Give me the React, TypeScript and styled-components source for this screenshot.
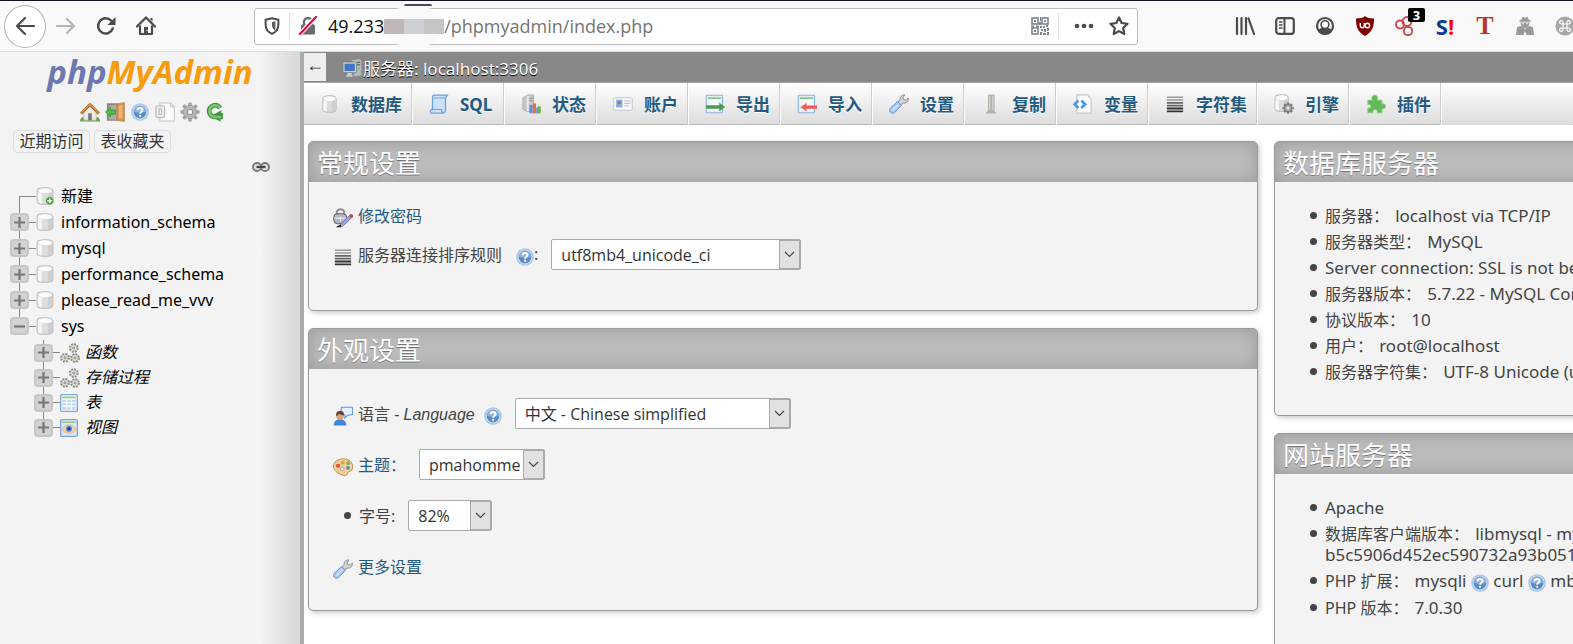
import React from 'react';
import styled, { createGlobalStyle } from 'styled-components';

const latin = '"Noto Sans", "Noto Sans CJK SC", sans-serif';
const controlFont = '"Open Sans", "Noto Sans CJK SC", sans-serif';

const GlobalStyle = createGlobalStyle`
  * { box-sizing: border-box; }
  html, body { margin: 0; height: 100%; overflow: hidden; background: #fff; }
  #root { height: 100%; }
  body { font: 16px/21px ${latin}; color: #444; }
  button, input, select { font: inherit; color: inherit; margin: 0; }
  a { color: #235a81; text-decoration: none; }
  svg { display: block; flex: none; }
`;

/* ---------- icons ---------- */

type IconProps = { size?: number };

const Svg = ({ size = 20, box = 16, children }: IconProps & { box?: number; children: React.ReactNode }) => (
  <svg width={size} height={size} viewBox={`0 0 ${box} ${box}`} aria-hidden="true">{children}</svg>
);

const BackIcon = () => (
  <Svg box={20}><path d="M19 10H2M10 2L2 10l8 8" fill="none" stroke="#4a4a4f" strokeWidth="2.2" strokeLinecap="round" strokeLinejoin="round" /></Svg>
);
const ForwardIcon = () => (
  <Svg box={20}><path d="M1 10h17M11 3l7 7-7 7" fill="none" stroke="#b5b5b7" strokeWidth="2.2" strokeLinecap="round" strokeLinejoin="round" /></Svg>
);
const ReloadIcon = () => (
  <Svg box={20}>
    <path d="M16.8 12.5A7.6 7.6 0 1 1 15.3 4.8" fill="none" stroke="#4a4a4f" strokeWidth="2.4" strokeLinecap="round" />
    <path d="M19.5 1v8h-8z" fill="#4a4a4f" />
  </Svg>
);
const HomeIcon = () => (
  <Svg box={20}>
    <path d="M1 10.5L10 1.5l9 9" fill="none" stroke="#4a4a4f" strokeWidth="2.3" strokeLinecap="round" strokeLinejoin="round" />
    <path d="M4 9.5V18h12V9.5" fill="none" stroke="#4a4a4f" strokeWidth="2.2" strokeLinejoin="round" />
    <path d="M8 11h4v7H8z" fill="#4a4a4f" />
    <path d="M14.5 2h2v3.5l-2-2z" fill="#4a4a4f" />
    <circle cx="11" cy="14.5" r=".7" fill="#fff" />
  </Svg>
);
const ShieldIcon = () => (
  <Svg size={18} box={18}>
    <path d="M9 1.2l6.4 1.6v5c0 4.300-2.300 7.200-6.400 9-4.100-1.800-6.400-4.700-6.400-9v-5z" fill="none" stroke="#4a4a4f" strokeWidth="2" strokeLinejoin="round" />
    <path d="M9 4.300v9.400c-2.300-1.300-3.400-3.200-3.400-5.900V5.100z" fill="#4a4a4f" transform="translate(3.400 0)" opacity=".9" />
  </Svg>
);
const LockIcon = () => (
  <Svg box={20}>
    <path d="M6 9V6a4 4 0 0 1 8 0v3" fill="none" stroke="#6a6a6e" strokeWidth="2.400" />
    <rect x="3" y="8.500" width="14" height="10" rx="1.500" fill="#6a6a6e" />
    <path d="M2 18L18 1" stroke="#fff" strokeWidth="4.500" />
    <path d="M2 18L18 1" stroke="#e8103f" strokeWidth="2.300" strokeLinecap="round" />
  </Svg>
);
const QrIcon = () => (
  <Svg size={18} box={18}>
    <g fill="none" stroke="#7d828c" strokeWidth="1.600">
      <rect x="1" y="1" width="6" height="6" /><rect x="11" y="1" width="6" height="6" /><rect x="1" y="11" width="6" height="6" />
    </g>
    <g fill="#7d828c">
      <path d="M3 3h2v2H3zM13 3h2v2h-2zM3 13h2v2H3zM9 0h1v4H9zM8 5h2v3H8zM0 8.500h3V10H0zM5 8.500h3V10H5zM9 9h2v2H9zM12 9h2v2h-2zM15 8h2v2h-2zM10 12h2v2h-2zM13 12h2v3h-2zM16 11h2v3h-2zM9 15h2v3H9zM12 16h3v2h-3zM16 15h2v3h-2z" />
    </g>
  </Svg>
);
const DotsIcon = () => (
  <Svg box={20}><g fill="#4a4a4f"><circle cx="3" cy="10" r="2.300" /><circle cx="10" cy="10" r="2.300" /><circle cx="17" cy="10" r="2.300" /></g></Svg>
);
const StarIcon = () => (
  <Svg box={20}><path d="M10 1.500l2.600 5.500 6 .8-4.400 4.200 1.100 6L10 15.100 4.700 18l1.100-6L1.400 7.800l6-.8z" fill="none" stroke="#4a4a4f" strokeWidth="2.200" strokeLinejoin="round" /></Svg>
);
const LibraryIcon = () => (
  <Svg box={20}><path d="M2 2v16M6.500 2v16M11 2v16M13.500 2.500L19 18" stroke="#4a4a4f" strokeWidth="2.200" strokeLinecap="round" /></Svg>
);
const PanelIcon = () => (
  <Svg box={20}>
    <rect x="1.200" y="2.200" width="17.600" height="15.600" rx="2.500" fill="none" stroke="#4a4a4f" strokeWidth="2.200" />
    <path d="M9.500 2v16" stroke="#4a4a4f" strokeWidth="2" /><path d="M4 6h3.500M4 9h3.500M4 12h3.500" stroke="#4a4a4f" strokeWidth="1.300" />
  </Svg>
);
const AccountIcon = () => (
  <Svg box={20}>
    <circle cx="10" cy="10" r="8" fill="none" stroke="#4a4a4f" strokeWidth="2.200" />
    <path d="M3 13c1.500 0 3.500-.6 4.500-1.500h5c1 .9 3 1.500 4.500 1.500-1.200 3-4 5-7 5s-5.800-2-7-5z" fill="#4a4a4f" />
    <circle cx="10" cy="8.600" r="3.900" fill="#fff" stroke="#4a4a4f" strokeWidth="1.600" />
  </Svg>
);
const UblockIcon = () => (
  <Svg box={20}>
    <path d="M10 0c2 1.800 5 2.500 9 2.500 0 9-2 13.500-9 17.500C3 16 1 11.500 1 2.500 5 2.500 8 1.800 10 0z" fill="#800000" />
    <path d="M5.300 7v2.700a2 2 0 0 0 4 0V7" fill="none" stroke="#fff" strokeWidth="1.400" />
    <circle cx="12.400" cy="9.500" r="2.200" fill="none" stroke="#fff" strokeWidth="1.400" />
  </Svg>
);
const RingsIcon = () => (
  <Svg box={20}><g fill="none" stroke="#c9474c" strokeWidth="1.900"><circle cx="5" cy="8.500" r="4" /><circle cx="12" cy="5.500" r="4.500" /><circle cx="13" cy="15" r="4.200" /></g></Svg>
);
const SpyIcon = () => (
  <Svg box={20}>
    <g fill="#9a9a9a">
      <path d="M6.500 3.500L7.500.8l2.500 1 2.500-1 1 2.700 2 .8v1.500h-11V4.300z" /><path d="M5.500 6.500h9c0 3-2 5.500-4.500 5.500S5.500 9.500 5.500 6.500z" />
      <path d="M2 11l4-1 4 3 4-3 4 1 1 8H11.500L10 15l-1.500 4H1z" />
    </g>
    <circle cx="8" cy="7.800" r=".8" fill="#f9f9fa" /><circle cx="12" cy="7.800" r=".8" fill="#f9f9fa" />
  </Svg>
);
const CommandIcon = () => (
  <Svg box={20}>
    <circle cx="10" cy="10" r="9.500" fill="#a6a6a6" />
    <path d="M8 8h4v4H8zM8 8H6.300A1.700 1.700 0 1 1 8 6.300zM12 8V6.300A1.700 1.700 0 1 1 13.700 8zM12 12h1.700a1.700 1.700 0 1 1-1.700 1.700zM8 12v1.700A1.700 1.700 0 1 1 6.300 12z" fill="none" stroke="#fff" strokeWidth="1.200" />
  </Svg>
);

const HouseIcon = () => (
  <Svg>
    <path d="M0 14h16v1.600H0z" fill="#6fa257" /><circle cx="2" cy="13.500" r="1.400" fill="#5fa04e" /><circle cx="14" cy="13.500" r="1.400" fill="#5fa04e" />
    <path d="M3 8l5-5 5 5v6.500H3z" fill="#efe9de" stroke="#b8ad9b" strokeWidth=".5" />
    <path d="M6.500 9h3v5.600h-3z" fill="#777b80" />
    <path d="M.8 9.200L8 2l7.200 7.200" fill="none" stroke="#a8682f" strokeWidth="2.400" strokeLinejoin="round" />
    <path d="M1 8.600L8 1.700l7 6.900" fill="none" stroke="#d99a58" strokeWidth="1" />
  </Svg>
);
const ExitIcon = () => (
  <Svg>
    <path d="M1.500 1H10v14H1.500z" fill="#8b877f" /><path d="M3 2.500h7V14H3z" fill="#aeada8" />
    <path d="M9.500 1.500l6-1v15l-6-1z" fill="#d9914a" stroke="#b9783c" strokeWidth=".6" /><path d="M11 3l3-.6v11l-3-.5z" fill="#eab478" />
    <path d="M.4 8l4-4v2.400h4v3.400h-4V12z" fill="#54b848" stroke="#3f9438" strokeWidth=".7" />
  </Svg>
);
const HelpIcon = ({ size = 18 }: IconProps) => (
  <Svg size={size}>
    <circle cx="8" cy="8" r="7.800" fill="#a9c4e4" /><circle cx="8" cy="8" r="6.600" fill="#d0e0f3" /><circle cx="8" cy="8" r="5.700" fill="#5a8cc6" /><path d="M2.500 7.500a5.600 5.600 0 0 1 11 0C10 9 6 9 2.500 7.500z" fill="#8db2de" />
    <path d="M5.900 6.400c0-1.300.9-2 2.100-2s2.200.7 2.200 1.900c0 1.500-2.100 1.500-2.100 3.200" fill="none" stroke="#fff" strokeWidth="1.700" />
    <circle cx="8.100" cy="11.400" r="1" fill="#fff" />
  </Svg>
);
const DocsIcon = () => (
  <Svg>
    <path d="M4 .8h8.500l3 3v11.400H4z" fill="#fbfbfb" stroke="#c8c8c8" strokeWidth=".9" /><path d="M12.500.8v3h3" fill="none" stroke="#c8c8c8" strokeWidth=".9" />
    <rect x=".7" y="3" width="7" height="9.500" rx="1.500" fill="#ececec" stroke="#b8b8b8" strokeWidth=".9" /><rect x="3.300" y="5.600" width="1.800" height="4.200" fill="#fff" stroke="#b0b0b0" strokeWidth=".8" />
  </Svg>
);
const gearTeeth = [0, 45, 90, 135];
const GearIcon = () => (
  <Svg>
    {gearTeeth.map((a) => <rect key={a} x="6.600" y=".3" width="2.800" height="15.400" rx=".8" fill="#a3a3a3" transform={`rotate(${a} 8 8)`} />)}
    <circle cx="8" cy="8" r="5.400" fill="#b7b7b7" stroke="#969696" strokeWidth=".7" /><circle cx="8" cy="8" r="2.200" fill="#f3f3f3" stroke="#8f8f8f" strokeWidth=".9" />
  </Svg>
);
const RefreshIcon = () => (
  <Svg>
    <path d="M12 4.800A4.700 4.700 0 1 0 8 12h2.500" fill="none" stroke="#3f9442" strokeWidth="3.800" />
    <path d="M7 10l6-3.500v2.300h1.300v5H12.500v2L7 12.500z" fill="#3f9442" />
    <path d="M12 4.500A4.700 4.700 0 1 0 8 12h5" fill="none" stroke="#7cc76e" strokeWidth="2" />
  </Svg>
);
const ChainIcon = () => (
  <svg width="18" height="10" viewBox="0 0 18 10" aria-hidden="true">
    <rect x="1" y="1" width="8" height="8" rx="4" fill="#ddd" stroke="#777" strokeWidth="1.800" />
    <rect x="9" y="1" width="8" height="8" rx="4" fill="#ddd" stroke="#777" strokeWidth="1.800" />
    <path d="M4.500 5h9" stroke="#444" strokeWidth="2.200" />
  </svg>
);
const cylinder = (
  <>
    <path d="M1 3.200C1 1.700 3.500.6 8 .6s7 1.100 7 2.600v9.600c0 1.500-2.500 2.600-7 2.600s-7-1.100-7-2.600z" fill="#dedede" stroke="#b9b9b9" strokeWidth=".9" />
    <path d="M1.600 4.500v8.300c0 1 1.200 1.600 3.400 2V5.700C3 5.500 2.200 5 1.600 4.500z" fill="#f8f8f8" /><path d="M10.500 5.600v9.200c2.500-.3 4-.9 4-2V4.500c-.8.600-2.300 1-4 1.100z" fill="#cfcfcf" />
    <ellipse cx="8" cy="3.300" rx="6.200" ry="2.100" fill="#fcfcfc" />
  </>
);
const DbIcon = ({ size = 18 }: IconProps) => <Svg size={size}>{cylinder}</Svg>;
const DatabasesIcon = () => <Svg><g transform="translate(1.500 .8) scale(.76 .9)">{cylinder}</g></Svg>;
const DbAddIcon = () => (
  <Svg size={18}>
    {cylinder}
    <circle cx="12.200" cy="12.200" r="3.700" fill="#4f9a3a" stroke="#dff0d8" strokeWidth=".6" /><path d="M12.200 10.100v4.200M10.100 12.200h4.200" stroke="#fff" strokeWidth="1.300" />
  </Svg>
);
const RoutineIcon = () => (
  <Svg>
    {[[11, 4], [4, 11.800], [12, 12]].map(([x, y], i) => (
      <g key={i} transform={`translate(${x} ${y})`}>
        <circle r="3.200" fill="#f0efe9" stroke="#8a8a80" strokeWidth="1.400" strokeDasharray="1.600 .9" /><circle r="2.400" fill="#efeee8" stroke="#9a9a90" strokeWidth=".5" /><circle r=".9" fill="none" stroke="#777" strokeWidth=".7" />
      </g>
    ))}
  </Svg>
);
const TableIcon = () => (
  <Svg size={18}>
    <rect x=".6" y=".6" width="14.800" height="14.800" rx="1" fill="#fff" stroke="#7ba7dc" strokeWidth="1.200" /><path d="M2 2.200h12v1.600H2z" fill="#8fce7d" />
    <path d="M2 5h12v9H2z" fill="#bcd5f3" /><path d="M2 7.800h12M2 10.800h12M6 5v9M10 5v9" stroke="#fff" />
  </Svg>
);
const ViewIcon = () => (
  <Svg size={18}>
    <rect x=".6" y=".6" width="14.800" height="14.800" rx="1" fill="#dce9fa" stroke="#7ba7dc" strokeWidth="1.200" /><path d="M2 2.200h12v1.400H2z" fill="#8fce7d" />
    <path d="M2 9c2-5 10-5 12 0-2 5-10 5-12 0z" fill="#f2cdb2" stroke="#e2b08d" strokeWidth=".8" /><circle cx="8" cy="8.700" r="2.600" fill="#4a7fd0" /><circle cx="8" cy="8.700" r="1.200" fill="#17305f" />
  </Svg>
);
const ServerIcon = () => (
  <Svg>
    <path d="M8 1.500l6-.7 1.500 1V14l-6 .8z" fill="#b9bcc0" stroke="#8f9296" strokeWidth=".5" /><path d="M12 3h2.500v1H12zM12 5h2.500v1H12z" fill="#666" /><circle cx="13.500" cy="8.500" r=".9" fill="#4fd33e" />
    <rect x=".8" y="3.200" width="10.700" height="8.600" rx=".8" fill="#d6d9dd" stroke="#73777c" strokeWidth=".7" /><path d="M2 4.500h8.300v6H2z" fill="#3f76c5" />
    <path d="M4.500 12h3l1.300 3H3.200z" fill="#c8cbcf" />
  </Svg>
);
const ScrollIcon = () => (
  <Svg><path d="M4 .8h10.800L13.200 3v9.200c0 2-.7 3-2.200 3H1.500C.8 14.500.7 13 2.200 12.400h.6V3c0-1.200.4-2.200 1.200-2.200z" fill="#cde2fa" stroke="#6d9fdc" strokeWidth="1" /><path d="M2.200 12.400h8c-.2 1.500.2 2.500 1 2.800M4 3.200h9" fill="none" stroke="#6d9fdc" strokeWidth=".9" /></Svg>
);
const StatusIcon = () => (
  <Svg>
    <path d="M1.500 3l4-2.200H10V14H5l-3.500-1.800z" fill="#c9c9c9" stroke="#b0b0b0" strokeWidth=".8" /><path d="M5.500 1.500v12" stroke="#ececec" strokeWidth="1.400" /><path d="M6.500 3.500h3M6.500 5.500h3" stroke="#999" />
    <path d="M6.700 8.700h2.500v6.800H6.700z" fill="#5c8df0" /><path d="M9.400 7.500h2.700v8H9.400z" fill="#ef6a48" /><path d="M12.200 11h1.400v4.500h-1.400z" fill="#5c8df0" /><path d="M13.400 9.800h2.400v5.700h-2.400z" fill="#64b955" />
  </Svg>
);
const UsersIcon = () => (
  <Svg>
    <rect x=".6" y="3" width="14.800" height="10" rx=".8" fill="#f8f8f8" stroke="#c9c9c9" strokeWidth=".8" /><path d="M2.500 4.500h5v6.200h-5z" fill="#7fb0ee" /><circle cx="5" cy="7" r="1.400" fill="#b5713a" />
    <path d="M9 5.500h5M9 7.500h5M9 9.500h3.500" stroke="#b7c6da" />
  </Svg>
);
const sheet = (
  <>
    <rect x="1" y="1" width="13" height="14" rx=".6" fill="#e4eefa" stroke="#8fb2de" strokeWidth=".9" /><path d="M2.300 2.600h10.400v1.400H2.300z" fill="#8fc682" /><path d="M2.300 5.500h10.400M2.300 8h10.400M2.300 12.500h10.400M5.600 5v9M9.200 5v9" stroke="#fff" />
  </>
);
const ExportIcon = () => <Svg>{sheet}<path d="M1 9.200h10.500V7.200l4.300 3.200-4.300 3.200v-2H1z" fill="#4c9a4c" stroke="#5fa85a" strokeWidth=".5" /></Svg>;
const ImportIcon = () => <Svg>{sheet}<path d="M16 9.300H7.500V7.400L3 10.500l4.500 3.100v-1.900H16z" fill="#ef5b57" stroke="#f07b77" strokeWidth=".5" /></Svg>;
const WrenchIcon = () => (
  <Svg>
    <path d="M9 8.800L6.800 6.600l2-2.100C8.600 2.500 10 .6 12.800.7L11.200 2.700l.6 1.800 1.900.4 1.800-1.600c.3 2.600-1.700 4.300-3.900 4z" fill="#d4d4d4" stroke="#919191" strokeWidth=".8" />
    <path d="M6.800 6l3.200 3-5.600 6c-2 1.500-5.300-1-3.600-3.400z" fill="#a9c6f2" stroke="#6f95d2" strokeWidth=".8" /><path d="M7.500 8.500l-4.700 4.700" stroke="#dfeafa" />
  </Svg>
);
const ReplicationIcon = () => (
  <Svg><path d="M6 .8h2v12.500H6zM8.500.8h2v12.500h-2z" fill="#d2d2ce" stroke="#a0a09c" strokeWidth=".6" /><path d="M5 14h6M4 15h8" stroke="#b0b0ac" strokeWidth="1.200" /></Svg>
);
const VariablesIcon = () => (
  <Svg><path d="M3 .7h8.500L14.500 4v11.300H3z" fill="#fbfbfb" stroke="#c6c6c6" strokeWidth=".9" /><path d="M4.300 5.200L1.300 8.200l3 3M6.700 5.200l3 3-3 3" fill="none" stroke="#4d98ea" strokeWidth="2.200" /></Svg>
);
const CharsetIcon = ({ size = 20 }: IconProps) => (
  <Svg size={size}><path d="M1.500 2.500h13M1.500 4.700h13" stroke="#999" strokeWidth="1.200" /><path d="M1.500 7h13M1.500 9.300h13" stroke="#666" strokeWidth="1.400" /><path d="M1.500 11.600h13M1.500 13.900h13" stroke="#333" strokeWidth="1.500" /></Svg>
);
const EngineIcon = () => (
  <Svg>
    <g transform="scale(.76 .9)">{cylinder}</g>
    <g transform="translate(6.800 6.800) scale(.56)">
      {gearTeeth.map((a) => <rect key={a} x="6.200" y="0" width="3.600" height="16" fill="#7e7e7e" transform={`rotate(${a} 8 8)`} />)}
      <circle cx="8" cy="8" r="5.200" fill="#a9a9a9" stroke="#6f6f6f" /><circle cx="8" cy="8" r="2" fill="#eee" />
    </g>
  </Svg>
);
const PluginIcon = () => (
  <Svg><path d="M1.500 5h3.800C4 3 5.200 1 7 1s3 2 1.700 4h4v3.300c1.500-1 2.800 0 2.800 1.500s-1.300 2.500-2.800 1.500V15H9c.5-2-.5-2.600-1.700-2.600S5.200 13 5.500 15h-4v-3.800c1.800.6 2.500-.2 2.500-1.400S3.300 8 1.500 8.500z" fill="#63b957" stroke="#7cc873" strokeWidth=".7" /></Svg>
);
const PasswordIcon = () => (
  <Svg>
    <path d="M3 6V4a3 3 0 0 1 6 0v2" fill="none" stroke="#8c8f99" strokeWidth="1.700" /><rect x=".6" y="4.600" width="10.400" height="8" rx="3" fill="#b4b7c1" stroke="#5c5f6b" strokeWidth=".8" /><path d="M1.500 8h8.500M6 7v3.500" stroke="#f1f1f5" />
    <path d="M14 5.200l1.800 1.700-7.600 7.300-2.300.7.600-2.300z" fill="#9ea5e8" stroke="#565ba8" strokeWidth=".6" /><circle cx="14.700" cy="6.300" r="1.400" fill="#d9432c" /><path d="M2 15.400h4l2-1.300-1.700-1.200z" fill="#222" /><path d="M6.500 12.700l1.700 1.500-1.800.7z" fill="#e0b23c" />
  </Svg>
);
const LanguageIcon = () => (
  <Svg>
    <path d="M7.500 1h7c1 0 1.200.6 1.200 1.200V6c0 .8-.4 1.200-1.200 1.200H12L9.500 9.600V7.200C7.800 6.800 6.500 6 6.500 4.800V2.200C6.500 1.500 6.800 1 7.500 1z" fill="#e3effd" stroke="#5f95d9" strokeWidth=".9" />
    <path d="M.6 15.500c0-3 1.600-5 5-5s5 2 5 5z" fill="#4287e0" /><circle cx="5.600" cy="8" r="3" fill="#dba273" /><path d="M2.500 8c-.3-3 1.200-4 3.200-4s3.400 1 3 3.600C7 7.500 5.500 6.800 5 6c-.5 1-1.500 1.700-2.500 2z" fill="#6a4226" />
  </Svg>
);
const ThemeIcon = () => (
  <Svg>
    <path d="M8.500 1.500c4.300 0 7.200 2.400 7.200 6.500 0 2.500-1.400 3.200-2.600 3.500-1.400.4-1.300 1.200-1.700 2.200-.5 1.200-2 1.400-3.400.9C3.500 13 .4 10.800.4 7.400c0-3.700 4-5.900 8.100-5.900z" fill="#f1cf9e" stroke="#c38a4b" strokeWidth=".8" />
    <circle cx="4" cy="7" r="1.700" fill="#e5533c" /><circle cx="7.800" cy="4.500" r="1.500" fill="#e8a33a" /><circle cx="12.200" cy="5" r="1.600" fill="#77b84d" /><circle cx="12" cy="8.600" r="1.500" fill="#3e96b8" /><circle cx="7.500" cy="9.500" r="1.400" fill="#fff" stroke="#b97a45" strokeWidth=".6" />
  </Svg>
);

/* ---------- browser toolbar ---------- */

const Page = styled.div`
  display: flex;
  flex-direction: column;
  height: 100vh;
  overflow: hidden;
`;

const BrowserBar = styled.header`
  display: flex;
  align-items: center;
  flex: none;
  height: 52px;
  border-top: 1px solid #15122b;
  border-bottom: 1px solid #dcdcdc;
  background: #f9f9fa;
  padding-left: 4px;
`;

const PlainButton = styled.button`
  display: flex;
  align-items: center;
  justify-content: center;
  flex: none;
  width: 40px;
  height: 40px;
  padding: 0;
  border: 0;
  background: none;
`;

const RoundButton = styled(PlainButton)`
  width: 42px;
  height: 43px;
  border: 1px solid #b4b4b6;
  border-radius: 50%;
  background: #fff;
`;

const AddressBar = styled.div`
  display: flex;
  align-items: center;
  flex: 0 1 884px;
  min-width: 0;
  height: 37px;
  margin: 0 auto 0 88px;
  padding: 0 8px;
  border: 1px solid #bcbcbe;
  border-radius: 3px;
  background: #fff;
  color: #0c0c0d;
  font: 18px/24px ${controlFont};
`;

const Separator = styled.span<{ $wide?: boolean }>`
  width: 1px;
  height: 26px;
  margin: ${(p) => (p.$wide ? '0 15px 0 9px' : '0 8px')};
  background: #dcdcde;
`;

const Host = styled.label`
  margin-left: 10px;
`;

const Smudge = styled.span`
  position: relative;
  display: flex;
  align-items: center;
  flex: none;
  width: 60px;
  height: 43px;
  border-radius: 50%;
  background: #f9f9fa;
  &::before {
    content: '';
    position: absolute;
    top: -1px;
    left: 20px;
    width: 28px;
    height: 2px;
    border-radius: 14px 14px 0 0;
    background: #4a4763;
  }
`;

const Mosaic = styled.span<{ $tone: string }>`
  flex: 1;
  height: 15px;
  background: ${(p) => p.$tone};
`;

const UrlInput = styled.input`
  flex: 1;
  min-width: 0;
  padding: 0;
  border: 0;
  background: none;
  color: #737373;
  outline: 0;
`;

const AddressActions = styled.div`
  display: flex;
  align-items: center;
  gap: 15px;
`;

const Extensions = styled.nav`
  display: flex;
  flex: none;
  margin-right: -12px;
`;

const ExtensionWrap = styled.div`
  position: relative;
`;

const Badge = styled.span`
  position: absolute;
  top: 2px;
  right: 0;
  width: 17px;
  height: 14px;
  border-radius: 2px;
  background: #000;
  color: #fff;
  font: bold 13px/14px "Open Sans", sans-serif;
  text-align: center;
`;

const Letters = styled.b<{ $serif?: boolean }>`
  color: ${(p) => (p.$serif ? '#b23a2e' : '#0b3d91')};
  font: bold ${(p) => (p.$serif ? '26px' : '22px')} / 26px ${(p) => (p.$serif ? '"Liberation Serif", serif' : '"Open Sans", sans-serif')};
  i { color: #f00; font-style: normal; }
`;

/* ---------- navigation panel ---------- */

const Body = styled.div`
  display: flex;
  flex: 1;
  min-height: 0;
`;

const Sidebar = styled.aside`
  flex: 0 0 304px;
  border-right: 4px solid #aaa;
  background: linear-gradient(to right, #f3f3f3 260px, #d3d8da 300px);
  color: #000;
`;

const Logo = styled.a`
  display: block;
  height: 50px;
  color: #6c78af;
  font: italic bold 33px/40px "Open Sans", sans-serif;
  text-align: center;
  em { color: #f89c0e; }
`;

const NavIcons = styled.nav`
  display: flex;
  gap: 5px;
  padding-left: 80px;
  a { display: flex; width: 20px; height: 20px; align-items: center; justify-content: center; }
`;

const QuickButtons = styled.div`
  display: flex;
  gap: 4px;
  padding: 8px 0 0 13px;
`;

const QuickButton = styled.button`
  height: 23px;
  width: 77px;
  padding: 0;
  border: 1px solid #ddd;
  border-radius: 4px;
  background: none;
  color: #333;
  line-height: 21px;
  white-space: nowrap;
`;

const ChainButton = styled(PlainButton)`
  width: 18px;
  height: 10px;
  margin: 9px 30px 0 auto;
`;

const Tree = styled.ul`
  list-style: none;
  margin: 0;
  padding: 11px 0 0 10px;
`;

const Branch = styled.ul`
  list-style: none;
  margin: 0;
  padding: 1px 0 0 24px;
`;

const TreeRow = styled.div<{ $sub?: boolean }>`
  display: flex;
  align-items: center;
  height: ${(p) => (p.$sub ? 25 : 26)}px;
  font-style: ${(p) => (p.$sub ? 'italic' : 'normal')};
  a { color: #000; margin-left: ${(p) => (p.$sub ? 5 : 7)}px; }
`;

const NodeIcon = styled.span`
  display: flex;
  flex: none;
  width: 20px;
`;

const Rail = styled.span<{ $from?: string; $to?: string }>`
  align-self: stretch;
  display: flex;
  align-items: center;
  flex: none;
  width: 19px;
  background: linear-gradient(#888, #888) no-repeat 9px ${(p) => (p.$from ? '100%' : '0')} / 1px ${(p) => (p.$from || p.$to ? '50%' : '100%')};
`;

const Stem = styled.span<{ $long?: boolean }>`
  width: ${(p) => (p.$long ? 16 : 7)}px;
  height: 1px;
  margin-left: ${(p) => (p.$long ? -9 : 0)}px;
  background: #888;
`;

const Toggle = styled.button`
  display: flex;
  align-items: center;
  justify-content: center;
  width: 19px;
  height: 18px;
  padding: 0;
  border: 2px solid #c6c6c6;
  border-radius: 4px;
  background: #d2d2d2;
`;

const ToggleMark = ({ open }: { open?: boolean }) => (
  <svg width="11" height="11" viewBox="0 0 11 11" aria-hidden="true">
    <path d={open ? 'M0 5.500h11' : 'M0 5.500h11M5.500 0v11'} stroke="#777" strokeWidth="2.200" />
  </svg>
);

/* ---------- main area ---------- */

const Main = styled.main`
  flex: 1;
  min-width: 0;
  overflow: hidden;
`;

const ServerBar = styled.div`
  display: flex;
  align-items: center;
  height: 30px;
  background: #888;
  a { display: flex; align-items: center; gap: 1px; padding-top: 2px; color: #fff; font-size: 17px; text-shadow: 0 1px 0 #000; margin-left: 16px; }
`;

const Collapse = styled.button`
  width: 22px;
  height: 28px;
  padding: 0 0 4px;
  border: 0;
  background: #eee;
  color: #333;
  font: 18px/20px "Liberation Sans", sans-serif;
`;

const TabBar = styled.nav`
  display: flex;
  height: 43px;
  border-top: 1px solid #aaa;
  background: linear-gradient(#fff, #dcdcdc);
`;

const Tab = styled.a`
  display: flex;
  align-items: center;
  flex: none;
  gap: 11px;
  min-width: 92px;
  padding: 0 10px 0 16px;
  border-right: 1px solid #fff;
  box-shadow: inset -1px 0 #ccc, inset 0 -1px #bbb;
  font-size: 17px;
  font-weight: bold;
  text-shadow: 0 1px 0 #fff;
`;

const Panes = styled.div`
  display: grid;
  grid-template-columns: minmax(0, 1fr) 634px;
  align-items: start;
  gap: 16px;
  width: calc(100% + 335px);
  padding: 16px 0 0 4px;
`;

const Column = styled.div`
  display: flex;
  flex-direction: column;
  gap: 17px;
`;

const Panel = styled.section`
  border: 1px solid #999;
  border-radius: 5px;
  background: #f3f3f3;
  box-shadow: 2px 2px 5px #ccc;
  overflow: hidden;
`;

const PanelTitle = styled.h2`
  height: 40px;
  margin: 0;
  padding-left: 8px;
  background: #bbb;
  box-shadow: inset 0 0 16px #999;
  color: #fff;
  font-size: 26px;
  font-weight: normal;
  line-height: 43px;
  text-shadow: 0 1px 0 #777;
`;

const Settings = styled.div<{ $roomy?: boolean }>`
  display: grid;
  grid-auto-rows: ${(p) => (p.$roomy ? 51 : 39)}px;
  padding: ${(p) => (p.$roomy ? '19px 24px 18px' : '14px 24px 36px')};
`;

const Row = styled.div`
  display: flex;
  align-items: center;
  white-space: pre;
  a, label { display: flex; align-items: center; gap: 5px; }
  > a, > label { padding-top: 1px; }
  a > svg, label > svg { margin-top: 4px; }
  i { font-family: "Liberation Sans", sans-serif; }
`;

const HelpLink = styled.a<{ $gap: number }>`
  margin-left: ${(p) => p.$gap}px;
`;

const Bullet = styled.span`
  width: 7px;
  height: 7px;
  margin: 0 8px 0 11px;
  border-radius: 50%;
  background: #444;
`;

const SelectBox = styled.span<{ $width: number; $gap: number }>`
  position: relative;
  width: ${(p) => p.$width}px;
  height: 31px;
  margin-left: ${(p) => p.$gap}px;
  border: 1px solid #aaa;
  border-radius: 2px;
  background: #fff;
  color: #333;
`;

const NativeSelect = styled.select`
  appearance: none;
  width: 100%;
  height: 29px;
  padding: 2px 20px 0 9px;
  border: 0;
  background: none;
  font-family: ${controlFont};
`;

const SelectArrow = styled.span`
  position: absolute;
  inset: 0 0 0 auto;
  display: flex;
  align-items: center;
  justify-content: center;
  width: 21px;
  border: 1px solid #aaa;
  background: #e1e1e1;
  pointer-events: none;
`;

const InfoList = styled.ul`
  margin: 0;
  padding: 20px 24px 31px 50px;
  list-style: none;
`;

const InfoItem = styled.li`
  position: relative;
  padding: 3px 0 2px;
  font-size: 17px;
  white-space: pre-wrap;
  svg { display: inline-block; vertical-align: -5px; }
  &::before {
    content: '';
    position: absolute;
    left: -15px;
    top: 10px;
    width: 7px;
    height: 7px;
    border-radius: 50%;
    background: #444;
  }
`;

const InfoLabel = styled.span`
  margin-right: 2px;
  font-size: 16px;
  line-height: 16px;
`;

const Select = ({ id, width, gap, value }: { id: string; width: number; gap: number; value: string }) => (
  <SelectBox $width={width} $gap={gap}>
    <NativeSelect id={id} defaultValue={value}><option>{value}</option></NativeSelect>
    <SelectArrow>
      <svg width="11" height="7" viewBox="0 0 11 7" aria-hidden="true"><path d="M1 1l4.500 4.500L10 1" fill="none" stroke="#444" strokeWidth="1.100" /></svg>
    </SelectArrow>
  </SelectBox>
);

const tabs: [string, React.ReactNode][] = [
  ['数据库', <DatabasesIcon />], ['SQL', <ScrollIcon />], ['状态', <StatusIcon />], ['账户', <UsersIcon />],
  ['导出', <ExportIcon />], ['导入', <ImportIcon />], ['设置', <WrenchIcon />], ['复制', <ReplicationIcon />],
  ['变量', <VariablesIcon />], ['字符集', <CharsetIcon />], ['引擎', <EngineIcon />], ['插件', <PluginIcon />],
];

const databases = ['information_schema', 'mysql', 'performance_schema', 'please_read_me_vvv'];

const sysItems: [string, React.ReactNode][] = [
  ['函数', <RoutineIcon />], ['存储过程', <RoutineIcon />], ['表', <TableIcon />], ['视图', <ViewIcon />],
];

const serverInfo: [string, string][] = [
  ['服务器： ', 'localhost via TCP/IP'],
  ['服务器类型： ', 'MySQL'],
  ['', 'Server connection: SSL is not being used'],
  ['服务器版本： ', '5.7.22 - MySQL Community Server (GPL)'],
  ['协议版本： ', '10'],
  ['用户： ', 'root@localhost'],
  ['服务器字符集： ', 'UTF-8 Unicode (utf8)'],
];

export default function App() {
  return (
    <Page>
      <GlobalStyle />
      <BrowserBar>
        <RoundButton aria-label="Back"><BackIcon /></RoundButton>
        <PlainButton aria-label="Forward"><ForwardIcon /></PlainButton>
        <PlainButton aria-label="Reload"><ReloadIcon /></PlainButton>
        <PlainButton aria-label="Home"><HomeIcon /></PlainButton>
        <AddressBar>
          <ShieldIcon />
          <Separator />
          <LockIcon />
          <Host htmlFor="url">49.233</Host>
          <Smudge>
            <Mosaic $tone="#bdb7b5" /><Mosaic $tone="#cdd1d4" /><Mosaic $tone="#c5c5c6" />
          </Smudge>
          <UrlInput id="url" defaultValue="/phpmyadmin/index.php" />
          <QrIcon />
          <Separator $wide />
          <AddressActions>
            <DotsIcon />
            <StarIcon />
          </AddressActions>
        </AddressBar>
        <Extensions>
          <PlainButton aria-label="Library"><LibraryIcon /></PlainButton>
          <PlainButton aria-label="Sidebars"><PanelIcon /></PlainButton>
          <PlainButton aria-label="Account"><AccountIcon /></PlainButton>
          <PlainButton aria-label="Blocker"><UblockIcon /></PlainButton>
          <ExtensionWrap>
            <PlainButton aria-label="Proxy"><RingsIcon /></PlainButton>
            <Badge>3</Badge>
          </ExtensionWrap>
          <PlainButton><Letters>S<i>!</i></Letters></PlainButton>
          <PlainButton><Letters $serif>T</Letters></PlainButton>
          <PlainButton aria-label="Agent"><SpyIcon /></PlainButton>
          <PlainButton aria-label="Gestures"><CommandIcon /></PlainButton>
        </Extensions>
      </BrowserBar>
      <Body>
        <Sidebar>
          <Logo href="#">php<em>MyAdmin</em></Logo>
          <NavIcons>
            <a href="#" aria-label="主页"><HouseIcon /></a>
            <a href="#" aria-label="退出"><ExitIcon /></a>
            <a href="#" aria-label="文档"><HelpIcon /></a>
            <a href="#" aria-label="手册"><DocsIcon /></a>
            <a href="#" aria-label="面板设置"><GearIcon /></a>
            <a href="#" aria-label="刷新"><RefreshIcon /></a>
          </NavIcons>
          <QuickButtons>
            <QuickButton>近期访问</QuickButton>
            <QuickButton>表收藏夹</QuickButton>
          </QuickButtons>
          <ChainButton aria-label="关联"><ChainIcon /></ChainButton>
          <Tree>
            <li>
              <TreeRow><Rail $from="middle" /><Stem $long /><DbAddIcon /><a href="#">新建</a></TreeRow>
            </li>
            {databases.map((name) => (
              <li key={name}>
                <TreeRow>
                  <Rail><Toggle aria-label="展开"><ToggleMark /></Toggle></Rail>
                  <Stem /><DbIcon /><a href="#">{name}</a>
                </TreeRow>
              </li>
            ))}
            <li>
              <TreeRow>
                <Rail $to="middle"><Toggle aria-label="折叠"><ToggleMark open /></Toggle></Rail>
                <Stem /><DbIcon /><a href="#">sys</a>
              </TreeRow>
              <Branch>
                {sysItems.map(([name, icon], i) => (
                  <li key={name}>
                    <TreeRow $sub>
                      <Rail $to={i === sysItems.length - 1 ? 'middle' : undefined}><Toggle aria-label="展开"><ToggleMark /></Toggle></Rail>
                      <Stem /><NodeIcon>{icon}</NodeIcon><a href="#">{name}</a>
                    </TreeRow>
                  </li>
                ))}
              </Branch>
            </li>
          </Tree>
        </Sidebar>
        <Main>
          <ServerBar>
            <Collapse aria-label="隐藏面板">←</Collapse>
            <a href="#"><ServerIcon /><span>服务器: localhost:3306</span></a>
          </ServerBar>
          <TabBar>
            {tabs.map(([name, icon]) => <Tab key={name} href="#">{icon}{name}</Tab>)}
          </TabBar>
          <Panes>
            <Column>
              <Panel>
                <PanelTitle>常规设置</PanelTitle>
                <Settings>
                  <Row><a href="#"><PasswordIcon />修改密码</a></Row>
                  <Row>
                    <label htmlFor="collation"><CharsetIcon />服务器连接排序规则</label>
                    <HelpLink $gap={14} href="#" aria-label="帮助"><HelpIcon /></HelpLink>:
                    <Select id="collation" width={250} gap={13} value="utf8mb4_unicode_ci" />
                  </Row>
                </Settings>
              </Panel>
              <Panel>
                <PanelTitle>外观设置</PanelTitle>
                <Settings $roomy>
                  <Row>
                    <label htmlFor="lang"><LanguageIcon /><span>语言 - <i>Language</i></span></label>
                    <HelpLink $gap={9} href="#" aria-label="帮助"><HelpIcon /></HelpLink>
                    <Select id="lang" width={276} gap={13} value="中文 - Chinese simplified" />
                  </Row>
                  <Row>
                    <label htmlFor="theme"><ThemeIcon /><a href="#">主题：</a></label>
                    <Select id="theme" width={126} gap={13} value="pmahomme" />
                  </Row>
                  <Row>
                    <Bullet /><label htmlFor="size">字号:</label>
                    <Select id="size" width={84} gap={13} value="82%" />
                  </Row>
                  <Row><a href="#"><WrenchIcon />更多设置</a></Row>
                </Settings>
              </Panel>
            </Column>
            <Column>
              <Panel>
                <PanelTitle>数据库服务器</PanelTitle>
                <InfoList>
                  {serverInfo.map(([label, text]) => (
                    <InfoItem key={text}>{label && <InfoLabel>{label}</InfoLabel>}{text}</InfoItem>
                  ))}
                </InfoList>
              </Panel>
              <Panel>
                <PanelTitle>网站服务器</PanelTitle>
                <InfoList>
                  <InfoItem>Apache</InfoItem>
                  <InfoItem><InfoLabel>数据库客户端版本： </InfoLabel>libmysql - mysqlnd 5.0.12-dev - 20150407 - $Id: b5c5906d452ec590732a93b051f3827e02749b83 $</InfoItem>
                  <InfoItem><InfoLabel>PHP 扩展： </InfoLabel>mysqli <HelpIcon /> curl <HelpIcon /> mbstring <HelpIcon /></InfoItem>
                  <InfoItem><InfoLabel>PHP 版本： </InfoLabel>7.0.30</InfoItem>
                </InfoList>
              </Panel>
            </Column>
          </Panes>
        </Main>
      </Body>
    </Page>
  );
}
